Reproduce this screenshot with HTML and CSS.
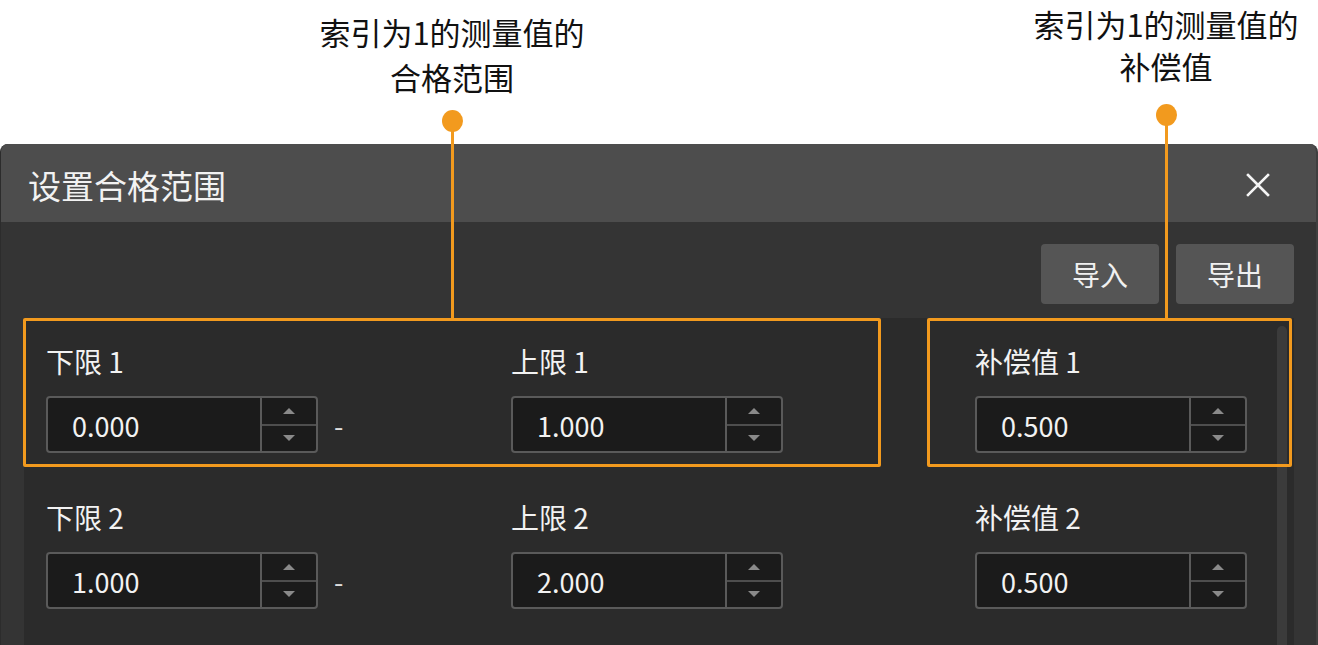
FILE: index.html
```html
<!DOCTYPE html>
<html lang="zh-CN">
<head>
<meta charset="utf-8">
<title>设置合格范围</title>
<link rel="stylesheet" href="styles.css">
</head>
<body>
<div class="stage">
  <header class="callouts">
    <p class="callout callout-range">索引为1的测量值的<br>合格范围</p>
    <p class="callout callout-comp">索引为1的测量值的<br>补偿值</p>
  </header>

  <section class="dialog">
    <div class="titlebar">
      <h1 class="title">设置合格范围</h1>
      <button class="close" aria-label="关闭">
        <svg viewBox="0 0 24 24" width="24" height="24"><path d="M2 2 L22 22 M22 2 L2 22" stroke="#f4f4f4" stroke-width="2.6" stroke-linecap="square" fill="none"/></svg>
      </button>
    </div>

    <div class="toolbar">
      <button class="btn">导入</button>
      <button class="btn">导出</button>
    </div>

    <div class="scroll">
      <div class="rows">
        <div class="row">
          <div class="field">
            <label class="label">下限 1</label>
            <div class="control">
              <div class="spin"><span class="spin-value">0.000</span><span class="spin-btns"><span class="spin-up"><i class="tri-up"></i></span><span class="spin-down"><i class="tri-down"></i></span></span></div>
              <span class="dash">-</span>
            </div>
          </div>
          <div class="field">
            <label class="label">上限 1</label>
            <div class="control">
              <div class="spin"><span class="spin-value">1.000</span><span class="spin-btns"><span class="spin-up"><i class="tri-up"></i></span><span class="spin-down"><i class="tri-down"></i></span></span></div>
            </div>
          </div>
          <div class="field">
            <label class="label">补偿值 1</label>
            <div class="control">
              <div class="spin"><span class="spin-value">0.500</span><span class="spin-btns"><span class="spin-up"><i class="tri-up"></i></span><span class="spin-down"><i class="tri-down"></i></span></span></div>
            </div>
          </div>
        </div>

        <div class="row">
          <div class="field">
            <label class="label">下限 2</label>
            <div class="control">
              <div class="spin"><span class="spin-value">1.000</span><span class="spin-btns"><span class="spin-up"><i class="tri-up"></i></span><span class="spin-down"><i class="tri-down"></i></span></span></div>
              <span class="dash">-</span>
            </div>
          </div>
          <div class="field">
            <label class="label">上限 2</label>
            <div class="control">
              <div class="spin"><span class="spin-value">2.000</span><span class="spin-btns"><span class="spin-up"><i class="tri-up"></i></span><span class="spin-down"><i class="tri-down"></i></span></span></div>
            </div>
          </div>
          <div class="field">
            <label class="label">补偿值 2</label>
            <div class="control">
              <div class="spin"><span class="spin-value">0.500</span><span class="spin-btns"><span class="spin-up"><i class="tri-up"></i></span><span class="spin-down"><i class="tri-down"></i></span></span></div>
            </div>
          </div>
        </div>
      </div>
      <div class="scrollbar"></div>
    </div>
  </section>

  <div class="highlight highlight-range"></div>
  <div class="highlight highlight-comp"></div>
  <div class="leader leader-range"></div>
  <div class="leader leader-comp"></div>
</div>
</body>
</html>
```

FILE: styles.css
```css
* { box-sizing: border-box; }

html, body {
  margin: 0;
  padding: 0;
  background: #ffffff;
  overflow: hidden;
}

body {
  font-family: "Noto Sans CJK SC", "Noto Sans", sans-serif;
}

.stage {
  position: relative;
  width: 1318px;
  height: 645px;
}

/* ---------- callout texts ---------- */
.callouts {
  position: relative;
  height: 144px;
}

.callout {
  position: absolute;
  margin: 0;
  font-size: 31px;
  color: #111111;
  text-align: center;
}

.callout-range {
  left: 252px;
  top: 9px;
  width: 400px;
  line-height: 45px;
}

.callout-comp {
  left: 1016px;
  top: 3px;
  width: 300px;
  line-height: 42px;
}

/* ---------- dialog ---------- */
.dialog {
  height: 501px;
  background: #343434;
  border-radius: 8px 8px 0 0;
  border-right: 2px solid #3f3f3f;
  border-left: 1px solid #2c2c2c;
  display: flex;
  flex-direction: column;
  overflow: hidden;
}

.titlebar {
  height: 78px;
  flex: none;
  background: #4d4d4d;
  display: flex;
  align-items: center;
  justify-content: space-between;
  padding: 0 46px 0 27px;
}

.title {
  margin: 0;
  padding-top: 3px;
  font-size: 33px;
  font-weight: 400;
  color: #f2f2f2;
  line-height: 40px;
}

.close {
  width: 24px;
  height: 24px;
  padding: 0;
  margin-top: 3px;
  border: 0;
  background: transparent;
  display: flex;
}

.toolbar {
  flex: none;
  display: flex;
  justify-content: flex-end;
  gap: 17px;
  padding: 22px 22px 0 0;
}

.btn {
  width: 118px;
  height: 60px;
  border: 0;
  border-radius: 4px;
  background: #555555;
  color: #f0f0f0;
  font-family: inherit;
  font-size: 28px;
  line-height: 1;
  padding: 0;
}

.scroll {
  flex: 1;
  margin: 14px 22px 0 23px;
  background: #2b2b2b;
  display: flex;
}

.rows {
  flex: 1;
  padding: 25px 0 0 22px;
  display: flex;
  flex-direction: column;
  gap: 46px;
}

.row {
  display: grid;
  grid-template-columns: 465px 464px 1fr;
}

.field {
  display: flex;
  flex-direction: column;
  gap: 17px;
}

.label {
  font-size: 28px;
  line-height: 36px;
  color: #f2f2f2;
}

.control {
  display: flex;
  align-items: center;
  gap: 16px;
}

.dash {
  font-size: 27px;
  color: #dddddd;
  line-height: 1;
  padding-top: 2px;
}

.spin {
  width: 272px;
  height: 57px;
  border: 2px solid #5a5a5a;
  border-radius: 4px;
  background: #1b1b1b;
  display: flex;
}

.spin-value {
  flex: 1;
  display: flex;
  align-items: center;
  padding: 2px 0 0 24px;
  font-size: 27px;
  color: #f2f2f2;
}

.spin-btns {
  width: 56px;
  border-left: 2px solid #5a5a5a;
  display: flex;
  flex-direction: column;
}

.spin-up,
.spin-down {
  flex: 1;
  display: flex;
  align-items: center;
  justify-content: center;
}

.spin-up {
  border-bottom: 2px solid #4e4e4e;
}

.tri-up,
.tri-down {
  width: 0;
  height: 0;
  border-left: 6px solid transparent;
  border-right: 6px solid transparent;
}

.tri-up { border-bottom: 6px solid #8a8a8a; }
.tri-down { border-top: 6px solid #8a8a8a; }

.scrollbar {
  width: 10px;
  margin: 8px 7px 0 0;
  background: #3b3b3b;
  border-radius: 5px 5px 0 0;
}

/* ---------- annotation overlays ---------- */
.highlight {
  position: absolute;
  border: 3px solid #f29a1e;
  border-radius: 2px;
}

.highlight-range {
  left: 23px;
  top: 318px;
  width: 858px;
  height: 149px;
}

.highlight-comp {
  left: 927px;
  top: 318px;
  width: 365px;
  height: 149px;
}

.leader {
  position: absolute;
  width: 3px;
  background: #f29a1e;
}

.leader::before {
  content: "";
  position: absolute;
  left: -9px;
  top: -11px;
  width: 21px;
  height: 22px;
  border-radius: 50%;
  background: #f29a1e;
}

.leader-range {
  left: 451px;
  top: 121px;
  height: 198px;
}

.leader-comp {
  left: 1165px;
  top: 115px;
  height: 204px;
}
```
